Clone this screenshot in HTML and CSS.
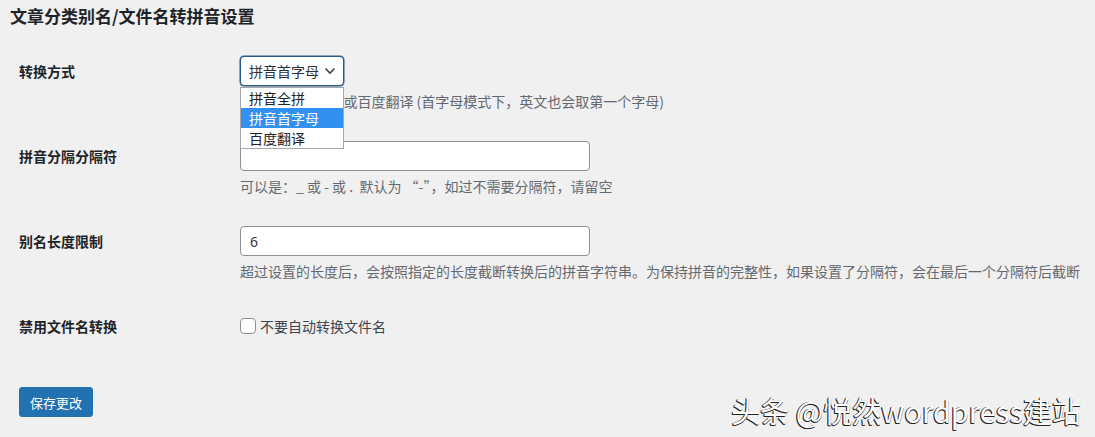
FILE: index.html
```html
<!DOCTYPE html>
<html lang="zh-CN">
<head>
  <meta charset="UTF-8" />
  <title>文章分类别名/文件名转拼音设置</title>
  <link rel="stylesheet" href="styles.css">
</head>
<body>

<div class="wrap">
  <h1>文章分类别名/文件名转拼音设置</h1>

  <form class="settings">
    <div class="row">
      <div class="label">转换方式</div>
      <div class="field">
        <div class="select-wrap">
          <div class="select">
            <span>拼音首字母</span>
            <svg width="12" height="8" viewBox="0 0 12 8"><polyline points="1.5,1.5 6,6 10.5,1.5" fill="none" stroke="#3c434a" stroke-width="1.6"/></svg>
          </div>
          <!-- opened native list -->
          <ul class="options">
            <li>拼音全拼</li>
            <li class="active">拼音首字母</li>
            <li>百度翻译</li>
          </ul>
        </div>
        <p class="desc">可选全拼/首字母或百度翻译 (首字母模式下，英文也会取第一个字母)</p>
      </div>
    </div>

    <div class="row">
      <div class="label">拼音分隔分隔符</div>
      <div class="field">
        <input class="text" type="text" value="" />
        <p class="desc">可以是：_ 或 - 或 .&nbsp; 默认为 “-”，如过不需要分隔符，请留空</p>
      </div>
    </div>

    <div class="row">
      <div class="label">别名长度限制</div>
      <div class="field">
        <input class="text" type="text" value="6" />
        <p class="desc">超过设置的长度后，会按照指定的长度截断转换后的拼音字符串。为保持拼音的完整性，如果设置了分隔符，会在最后一个分隔符后截断</p>
      </div>
    </div>

    <div class="row">
      <div class="label">禁用文件名转换</div>
      <div class="field">
        <label class="check"><span class="box"></span>不要自动转换文件名</label>
      </div>
    </div>

    <div class="submit">
      <button type="button">保存更改</button>
    </div>
  </form>
</div>

<div class="watermark">头条 @悦然wordpress建站</div>

</body>
</html>
```

FILE: styles.css
```css
* {
  box-sizing: border-box;
}

body {
  margin: 0;
  background: #f0f0f1;
  color: #1d2327;
  font-family: "Noto Sans CJK SC", "Noto Sans", sans-serif;
  height: 437px;
  overflow: hidden;
  position: relative;
}

.wrap {
  padding: 0 0 0 10px;
}

h1 {
  font-size: 17px;
  font-weight: bold;
  line-height: 24px;
  margin: 0;
  padding-top: 4px;
  margin-bottom: 14px;
}

.settings {
  padding-left: 9px;
}

.row {
  display: flex;
  padding: 14px 0 15px;
}

.label {
  width: 221px;
  flex-shrink: 0;
  font-size: 14px;
  font-weight: bold;
  line-height: 30px;
}

.field {
  flex: 1;
}

.select-wrap {
  position: relative;
  width: 104px;
  height: 30px;
}

.select {
  display: flex;
  align-items: center;
  justify-content: space-between;
  height: 30px;
  padding: 0 7px 0 8px;
  background: #fff;
  border: 1px solid #2c5a85;
  box-shadow: 0 0 0 0.5px #2c5a85;
  border-radius: 4px;
  font-size: 14px;
  color: #2c3338;
}

.options {
  position: absolute;
  left: 0;
  top: 31px;
  width: 104px;
  margin: 0;
  padding: 0;
  list-style: none;
  background: #fff;
  border: 1px solid #a5a7aa;
  z-index: 2;
}

.options li {
  height: 20px;
  line-height: 20px;
  padding-left: 8px;
  font-size: 14px;
  color: #1d2327;
}

.options li.active {
  background: #3190f0;
  color: #fff;
}

.desc {
  margin: 4px 0 0;
  font-size: 14px;
  line-height: 22px;
  color: #646970;
  white-space: nowrap;
}

.text {
  display: block;
  width: 350px;
  height: 30px;
  margin: 0;
  padding: 0 9px;
  background: #fff;
  border: 1px solid #8c8f94;
  border-radius: 4px;
  font-family: "Noto Sans", "Noto Sans CJK SC", sans-serif;
  font-size: 14px;
  color: #2c3338;
}

.check {
  display: flex;
  align-items: center;
  height: 30px;
  font-size: 14px;
  color: #3c434a;
}

.box {
  width: 16px;
  height: 16px;
  margin-right: 4px;
  background: #fff;
  border: 1px solid #8c8f94;
  border-radius: 4px;
}

.submit {
  margin-top: 31px;
}

button {
  height: 30px;
  padding: 0 10px;
  background: #2271b1;
  border: 1px solid #2271b1;
  border-radius: 3px;
  color: #fff;
  font-family: "Noto Sans CJK SC", sans-serif;
  font-size: 13px;
}

.watermark {
  position: absolute;
  right: 14px;
  bottom: 10px;
  font-size: 29px;
  line-height: 34px;
  color: #fff;
  font-family: "Noto Sans CJK SC", "Noto Sans", sans-serif;
  text-shadow: -1px 1px 0 #222, -1px 0 0 #333, 0 1px 0 #333;
}
```
